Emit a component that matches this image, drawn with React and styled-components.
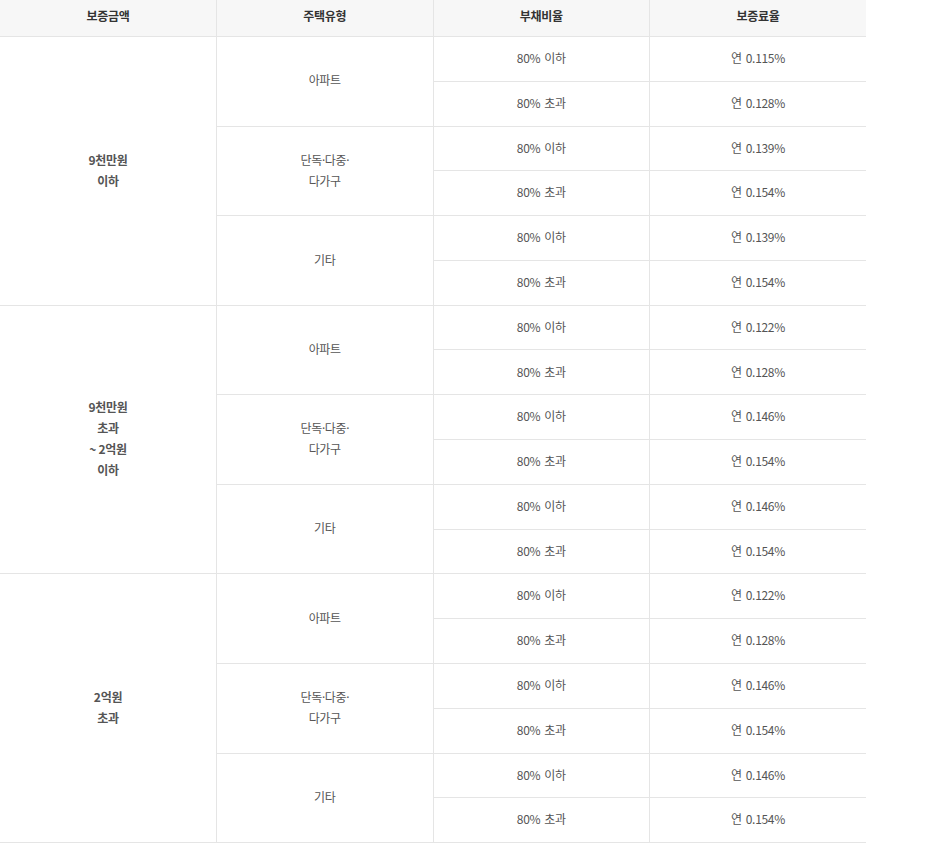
import React from "react";
import styled, { createGlobalStyle } from "styled-components";

const GlobalStyle = createGlobalStyle`
  body {
    margin: 0;
    background: #fff;
    font-family: "Noto Sans CJK KR", "Noto Sans", sans-serif;
  }
`;

const Table = styled.table`
  width: 866px;
  border-collapse: collapse;
  table-layout: fixed;
  font-size: 12px;
  letter-spacing: -0.3px;
  color: #555;
`;

const HeadCell = styled.th`
  height: 21px;
  padding: 4.5px 0 10.5px;
  line-height: 21px;
  background: #f7f7f7;
  color: #333;
  font-weight: 700;
  border-bottom: 1px solid #e5e5e5;
  border-left: ${(p) => (p.$first ? 0 : "1px solid #e5e5e5")};
`;

const Cell = styled.td`
  padding: 10.1px 4px 12.7px;
  line-height: 21px;
  text-align: center;
  vertical-align: middle;
  border-bottom: 1px solid #e5e5e5;
  border-left: ${(p) => (p.$first ? 0 : "1px solid #e5e5e5")};
  font-weight: ${(p) => (p.$strong ? 700 : 400)};
`;

const Gap = styled.span`
  display: inline-block;
  width: 4px;
`;

const Dot = styled.span`
  font-family: "Noto Sans", sans-serif;
  line-height: 0;
  letter-spacing: -0.5px;
`;

const groups = [
  {
    amount: ["9천만원", "이하"],
    rates: [
      ["0.115", "0.128"],
      ["0.139", "0.154"],
      ["0.139", "0.154"],
    ],
  },
  {
    amount: ["9천만원", "초과", "~ 2억원", "이하"],
    rates: [
      ["0.122", "0.128"],
      ["0.146", "0.154"],
      ["0.146", "0.154"],
    ],
  },
  {
    amount: ["2억원", "초과"],
    rates: [
      ["0.122", "0.128"],
      ["0.146", "0.154"],
      ["0.146", "0.154"],
    ],
  },
];

const types = [
  ["아파트"],
  [
    <>
      단독<Dot>·</Dot>다중<Dot>·</Dot>
    </>,
    "다가구",
  ],
  ["기타"],
];
const ratioWords = ["이하", "초과"];

const Lines = ({ lines }) =>
  lines.map((l, i) => (
    <React.Fragment key={i}>
      {i > 0 && <br />}
      {l}
    </React.Fragment>
  ));

export default function App() {
  return (
    <>
      <GlobalStyle />
      <Table>
        <thead>
          <tr>
            <HeadCell $first>보증금액</HeadCell>
            <HeadCell>주택유형</HeadCell>
            <HeadCell>부채비율</HeadCell>
            <HeadCell>보증료율</HeadCell>
          </tr>
        </thead>
        <tbody>
          {groups.map((g, gi) =>
            types.map((t, ti) =>
              ratioWords.map((w, ri) => (
                <tr key={`${gi}-${ti}-${ri}`}>
                  {ti === 0 && ri === 0 && (
                    <Cell $first $strong rowSpan={6}>
                      <Lines lines={g.amount} />
                    </Cell>
                  )}
                  {ri === 0 && (
                    <Cell rowSpan={2}>
                      <Lines lines={t} />
                    </Cell>
                  )}
                  <Cell>
                    80%
                    <Gap />
                    {w}
                  </Cell>
                  <Cell>
                    연<Gap />
                    {g.rates[ti][ri]}%
                  </Cell>
                </tr>
              ))
            )
          )}
        </tbody>
      </Table>
    </>
  );
}
